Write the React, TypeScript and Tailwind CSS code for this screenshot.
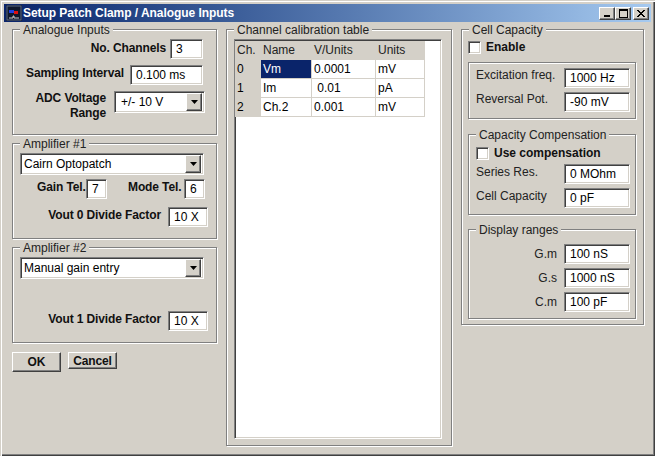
import { Fragment } from "react";
import type { ReactNode } from "react";

const ETCHED = "relative border border-[#808080] shadow-[1px_1px_0_#fff,inset_1px_1px_0_#fff]";
const SUNKEN =
  "border border-t-[#808080] border-l-[#808080] border-r-white border-b-white shadow-[inset_1px_1px_0_#404040,inset_-1px_-1px_0_#d4d0c8] bg-white";
const RAISED =
  "border border-t-white border-l-white border-r-[#404040] border-b-[#404040] shadow-[inset_-1px_-1px_0_#808080,inset_1px_1px_0_#d4d0c8] bg-[#d4d0c8]";

function Group({ title, className, children }: { title: string; className: string; children: ReactNode }) {
  return (
    <div className={`${ETCHED} ${className}`}>
      <span className="absolute top-[-7px] left-[7px] bg-[#d4d0c8] px-[3px] text-[12px] font-normal leading-[14px] tracking-normal text-[#222]">{title}</span>
      {children}
    </div>
  );
}

function Field({ value, className }: { value: string; className: string }) {
  return (
    <div className={`${SUNKEN} flex items-center pl-[5px] text-[12px] font-normal leading-none tracking-normal text-black whitespace-nowrap ${className}`}>
      {value}
    </div>
  );
}

function Combo({ value, className }: { value: string; className: string }) {
  return (
    <div className={`${SUNKEN} flex items-center justify-between pr-[2px] text-[12px] font-normal tracking-normal text-black ${className}`}>
      <span>{value}</span>
      <span className={`${RAISED} flex h-[18px] w-[16px] items-center justify-center`}>
        <svg width="7" height="4" viewBox="0 0 7 4"><path d="M0 0h7L3.5 4z" fill="#000" /></svg>
      </span>
    </div>
  );
}

function WinButton({ children }: { children: ReactNode }) {
  return <div className={`${RAISED} flex h-[13px] w-[16px] items-center justify-center`}>{children}</div>;
}

function Check({ label, className }: { label: string; className: string }) {
  return (
    <div className={`flex items-center text-[12px] font-bold text-[#111] ${className}`}>
      <span className={`${SUNKEN} mr-[5px] h-[13px] w-[13px]`} />
      {label}
    </div>
  );
}

const rows = [
  ["0", "Vm", "0.0001", "mV"],
  ["1", "Im", " 0.01", "pA"],
  ["2", "Ch.2", "0.001", "mV"],
];

export default function App() {
  return (
    <div className="h-[456px] w-[655px] overflow-hidden bg-[#d4d0c8] pt-[4px] pl-[4px] shadow-[inset_1px_1px_0_#d4d0c8,inset_2px_2px_0_#fff,inset_-1px_-1px_0_#404040,inset_-2px_-2px_0_#808080] [font-family:'Liberation_Sans',Arial,sans-serif]">
      <div className="flex h-[18px] w-[647px] items-center bg-gradient-to-r from-[#0a246a] to-[#a6caf0] pl-[2px] pr-[2px]">
        <svg width="16" height="16" viewBox="0 0 16 16" className="mr-[1px] shrink-0">
          <rect width="16" height="16" fill="#10182c" />
          <rect x="1" y="1" width="14" height="14" fill="none" stroke="#5a6a88" />
          <rect x="3" y="5" width="5" height="3" fill="#2040e0" />
          <rect x="8" y="6" width="4" height="3" fill="#e01010" />
          <path d="M3 13h4v-2h1v2h5" stroke="#c8c8c8" fill="none" />
        </svg>
        <span className="text-[12px] font-bold tracking-[-0.05px] text-white">Setup Patch Clamp / Analogue Inputs</span>
        <div className="ml-auto flex">
          <WinButton><span className="mt-[6px] h-[2px] w-[6px] bg-black" /></WinButton>
          <div className="mr-[2px]">
            <WinButton><span className="h-[9px] w-[9px] border border-t-2 border-black" /></WinButton>
          </div>
          <WinButton>
            <svg width="8" height="7" viewBox="0 0 8 7"><path d="M0 0l7 7M1 0l7 7M7 0L0 7M8 0L1 7" stroke="#000" strokeWidth="1" /></svg>
          </WinButton>
        </div>
      </div>

      <div className="flex pt-[7px] pl-[8px] text-[12px]">
        {/* left column */}
        <div className="flex w-[205px] flex-col font-bold tracking-[-0.12px] text-[#111]">
          <Group title="Analogue Inputs" className="h-[106px] w-[205px]">
            <div className="mt-[9px] flex items-center justify-end pr-[13px]">
              <span className="mr-[4px] -translate-y-[1px]">No. Channels</span>
              <Field value="3" className="h-[20px] w-[33px]" />
            </div>
            <div className="mt-[6px] flex items-center justify-end pr-[13px]">
              <span className="mr-[6px] -translate-y-[2px]">Sampling Interval</span>
              <Field value="0.100 ms" className="h-[20px] w-[73px]" />
            </div>
            <div className="mt-[6px] flex items-start justify-end pr-[11px]">
              <span className="mr-[8px] text-right leading-[15px]">ADC Voltage<br />Range</span>
              <Combo value="+/- 10 V" className="h-[22px] w-[91px] pl-[6px]" />
            </div>
          </Group>

          <Group title="Amplifier #1" className="mt-[8px] h-[96px] w-[205px]">
            <Combo value="Cairn Optopatch" className="mt-[9px] ml-[7px] h-[22px] w-[184px] pl-[3px]" />
            <div className="mt-[4px] flex items-center pl-[24px]">
              <span className="mr-[3px] w-[46px] -translate-y-[2px] whitespace-nowrap">Gain Tel.</span>
              <Field value="7" className="h-[20px] w-[21px] pl-[3px]" />
              <span className="mr-[3px] ml-[21px] w-[53px] -translate-y-[2px] whitespace-nowrap">Mode Tel.</span>
              <Field value="6" className="h-[20px] w-[21px] pl-[3px]" />
            </div>
            <div className="mt-[8px] flex items-center justify-end pr-[8px]">
              <span className="mr-[7px] -translate-y-[2px]">Vout 0 Divide Factor</span>
              <Field value="10 X" className="h-[20px] w-[40px]" />
            </div>
          </Group>

          <Group title="Amplifier #2" className="mt-[8px] h-[96px] w-[205px]">
            <Combo value="Manual gain entry" className="mt-[9px] ml-[7px] h-[22px] w-[184px] pl-[3px]" />
            <div className="mt-[32px] flex items-center justify-end pr-[8px]">
              <span className="mr-[7px] -translate-y-[2px]">Vout 1 Divide Factor</span>
              <Field value="10 X" className="h-[20px] w-[40px]" />
            </div>
          </Group>

          <div className="mt-[9px] flex items-start gap-[7px]">
            <button className={`${RAISED} h-[20px] w-[49px]`}>OK</button>
            <button className={`${RAISED} h-[17px] w-[49px] leading-none`}>Cancel</button>
          </div>
        </div>

        {/* calibration table */}
        <Group title="Channel calibration table" className="ml-[9px] h-[417px] w-[226px]">
          <div className={`${SUNKEN} mt-[9px] ml-[7px] h-[400px] w-[208px] pt-px`}>
            <div className="grid w-fit grid-cols-[25px_50px_63px_48px] grid-rows-[18px_18px_18px_18px] gap-px bg-[#d4d0c8] pr-px pb-px text-[12px] leading-[18px] text-black">
              {["Ch.", "Name", "V/Units", "Units"].map((h) => (
                <div key={h} className="bg-[#d4d0c8] pl-[2px] text-[#222]">{h}</div>
              ))}
              {rows.map((r) => (
                <Fragment key={r[0]}>
                  <div className="bg-[#d4d0c8] pl-[2px]">{r[0]}</div>
                  <div className={r[1] === "Vm" ? "bg-[#0a246a] pl-[2px] text-white" : "bg-white pl-[2px]"}>{r[1]}</div>
                  <div className="bg-white pl-[2px] whitespace-pre">{r[2]}</div>
                  <div className="bg-white pl-[2px]">{r[3]}</div>
                </Fragment>
              ))}
            </div>
          </div>
        </Group>

        {/* right column */}
        <Group title="Cell Capacity" className="ml-[9px] h-[296px] w-[183px]">
          <Check label="Enable" className="mt-[10px] ml-[6px] h-[14px]" />
          <div className={`${ETCHED} mt-[8px] ml-[6px] h-[57px] w-[168px] pt-[5px] text-[#222]`}>
            <div className="flex items-center pr-[5px] pl-[7px]">
              <span className="-translate-y-[3px]">Excitation freq.</span>
              <Field value="1000 Hz" className="ml-auto h-[20px] w-[66px]" />
            </div>
            <div className="mt-[4px] flex items-center pr-[5px] pl-[7px]">
              <span className="-translate-y-[3px]">Reversal Pot.</span>
              <Field value="-90 mV" className="ml-auto h-[20px] w-[66px]" />
            </div>
          </div>
          <Group title="Capacity Compensation" className="mt-[15px] ml-[6px] h-[81px] w-[168px]">
            <Check label="Use compensation" className="mt-[11px] ml-[7px] h-[14px]" />
            <div className="mt-[4px] flex items-center pr-[5px] pl-[7px] text-[#222]">
              <span className="-translate-y-[2px]">Series Res.</span>
              <Field value="0 MOhm" className="ml-auto h-[20px] w-[66px]" />
            </div>
            <div className="mt-[4px] flex items-center pr-[5px] pl-[7px] text-[#222]">
              <span className="-translate-y-[2px]">Cell Capacity</span>
              <Field value="0 pF" className="ml-auto h-[20px] w-[66px]" />
            </div>
          </Group>
          <Group title="Display ranges" className="mt-[14px] ml-[6px] h-[90px] w-[168px] pt-[14px] text-[#222]">
            {[["G.m", "100 nS"], ["G.s", "1000 nS"], ["C.m", "100 pF"]].map(([l, v]) => (
              <div key={l} className="mb-[4px] flex items-center justify-end pr-[5px]">
                <span className="mr-[7px]">{l}</span>
                <Field value={v} className="h-[20px] w-[66px]" />
              </div>
            ))}
          </Group>
        </Group>
      </div>
    </div>
  );
}
